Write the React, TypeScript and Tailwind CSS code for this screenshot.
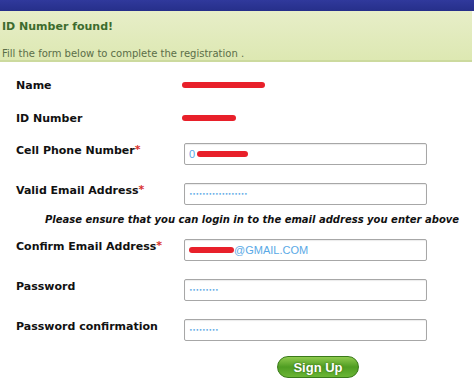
import React from "react";

const Dots = ({ n }: { n: number }) => (
  <span className="text-[#5aa9e6] text-[6px] tracking-[-0.3px] leading-none">{"•".repeat(n)}</span>
);

const Redact = ({ w, h = 6 }: { w: number; h?: number }) => (
  <span className="inline-block rounded-full bg-[#e8202a]" style={{ width: w, height: h }} />
);

const Input = ({ children }: { children?: React.ReactNode }) => (
  <div className="w-[243px] h-[22px] border border-[#a7a7a7] rounded-[2px] bg-white flex items-center pl-[4px] shadow-[inset_0_1px_1px_rgba(0,0,0,0.08)]">
    {children}
  </div>
);

const Label = ({ text, req }: { text: string; req?: boolean }) => (
  <div className="w-[168px] shrink-0 text-[11px] font-bold text-[#111] leading-[14px] pt-[1px]">
    {text}
    {req && <span className="text-[#d9302a] relative -top-[1px]">*</span>}
  </div>
);

export default function App() {
  return (
    <div className="w-[474px] h-[390px] bg-white overflow-hidden" style={{ fontFamily: '"DejaVu Sans", Verdana, sans-serif' }}>
      <div className="h-[11px] bg-gradient-to-b from-[#30399c] to-[#262f8a]" />
      <div className="h-[51px] w-[472px] bg-gradient-to-b from-[#e7eec8] to-[#dde8b2] border-b-2 border-[#ccda9e] pl-[2px] pt-[9px]">
        <div className="text-[11px] font-bold text-[#3d6b2e] leading-[14px]">ID Number found!</div>
        <div className="text-[10px] text-[#5b6e48] leading-[13px] mt-[13px]">Fill the form below to complete the registration .</div>
      </div>

      <div className="pl-[16px] pt-[16px] flex flex-col">
        <div className="flex items-center h-[14px]">
          <Label text="Name" />
          <span className="-ml-[2px] flex"><Redact w={83} /></span>
        </div>
        <div className="flex items-center h-[14px] mt-[19px]">
          <Label text="ID Number" />
          <span className="-ml-[2px] flex"><Redact w={54} /></span>
        </div>
        <div className="flex items-start mt-[18px]">
          <Label text="Cell Phone Number" req />
          <Input>
            <span className="text-[#5aa9e6] text-[11px]" style={{ fontFamily: '"Liberation Sans", Arial, sans-serif' }}>0</span>
            <span className="flex ml-[2px]"><Redact w={51} /></span>
          </Input>
        </div>
        <div className="flex items-start mt-[18px]">
          <Label text="Valid Email Address" req />
          <Input><Dots n={18} /></Input>
        </div>
        <div className="pl-[29px] mt-[8px] text-[10px] font-bold italic text-[#111] leading-[13px] whitespace-nowrap">
          Please ensure that you can login in to the email address you enter above
        </div>
        <div className="flex items-start mt-[13px]">
          <Label text="Confirm Email Address" req />
          <Input>
            <span className="flex"><Redact w={45} /></span>
            <span className="text-[#5aa9e6] text-[11px]" style={{ fontFamily: '"Liberation Sans", Arial, sans-serif' }}>@GMAIL.COM</span>
          </Input>
        </div>
        <div className="flex items-start mt-[18px]">
          <Label text="Password" />
          <Input><Dots n={9} /></Input>
        </div>
        <div className="flex items-start mt-[18px]">
          <Label text="Password confirmation" />
          <Input><Dots n={9} /></Input>
        </div>
        <div className="pl-[261px] mt-[15px]">
          <button
            className="w-[82px] h-[22px] rounded-full bg-gradient-to-b from-[#8fcb4e] via-[#4f9d22] to-[#6ab535] border border-[#3a7a1a] text-white font-bold text-[13px] leading-none flex items-center justify-center [text-shadow:0_0_2px_#2d5f12]"
            style={{ fontFamily: '"Liberation Sans", Arial, sans-serif' }}
          >
            Sign Up
          </button>
        </div>
      </div>
    </div>
  );
}
